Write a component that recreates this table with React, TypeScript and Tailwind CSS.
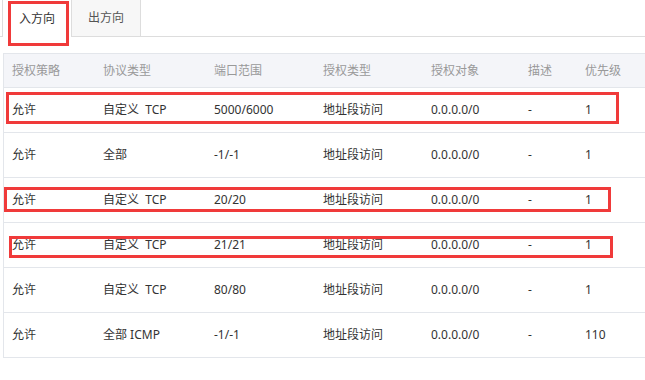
import React from "react";

const cols = [
  "w-[91px]",
  "w-[111px]",
  "w-[109px]",
  "w-[108px]",
  "w-[97px]",
  "w-[57px]",
  "flex-1",
];

const headers = ["授权策略", "协议类型", "端口范围", "授权类型", "授权对象", "描述", "优先级"];

const rows: string[][] = [
  ["允许", "自定义  TCP", "5000/6000", "地址段访问", "0.0.0.0/0", "-", "1"],
  ["允许", "全部", "-1/-1", "地址段访问", "0.0.0.0/0", "-", "1"],
  ["允许", "自定义  TCP", "20/20", "地址段访问", "0.0.0.0/0", "-", "1"],
  ["允许", "自定义  TCP", "21/21", "地址段访问", "0.0.0.0/0", "-", "1"],
  ["允许", "自定义  TCP", "80/80", "地址段访问", "0.0.0.0/0", "-", "1"],
  ["允许", "全部 ICMP", "-1/-1", "地址段访问", "0.0.0.0/0", "-", "110"],
];

export default function App() {
  return (
    <div
      className="relative w-[645px] h-[380px] bg-white overflow-hidden text-[12px] text-[#333]"
      style={{ fontFamily: '"Noto Sans", "Noto Sans CJK SC", sans-serif' }}
    >
      {/* Tabs */}
      <div className="flex h-[37px]">
        <div className="w-[2px] border-b border-[#dddddd]" />
        <div className="w-[69px] border-l border-[#dddddd] bg-white flex items-center justify-center text-[#333]">
          入方向
        </div>
        <div className="w-[70px] border-l border-r border-b border-[#dddddd] bg-[#f7f7f7] flex items-center justify-center text-[#555]">
          出方向
        </div>
        <div className="flex-1 border-b border-[#dddddd]" />
      </div>

      {/* Table */}
      <div className="mt-[16px] ml-[3px] border-l border-t border-[#e3e6eb]">
        <div className="flex h-[34px] items-center bg-[#f4f5f9] border-b border-[#e3e6eb] text-[#999]">
          {headers.map((h, i) => (
            <div key={i} className={`${cols[i]} pl-[8px]`}>
              {h}
            </div>
          ))}
        </div>
        {rows.map((r, ri) => (
          <div key={ri} className="flex h-[45px] items-center border-b border-[#e3e6eb]">
            {r.map((c, ci) => (
              <div key={ci} className={`${cols[ci]} pl-[8px] whitespace-pre`}>
                {c}
              </div>
            ))}
          </div>
        ))}
      </div>

      {/* Red annotation boxes */}
      <div className="absolute left-[8px] top-[1px] w-[61px] h-[45px] border-[3px] border-[#f03a3a]" />
      <div className="absolute left-[6px] top-[92px] w-[613px] h-[32px] border-[3px] border-[#f03a3a]" />
      <div className="absolute left-[4px] top-[187px] w-[607px] h-[25px] border-[3px] border-[#f03a3a]" />
      <div className="absolute left-[9px] top-[236px] w-[604px] h-[22px] border-[3px] border-[#f03a3a]" />
    </div>
  );
}
